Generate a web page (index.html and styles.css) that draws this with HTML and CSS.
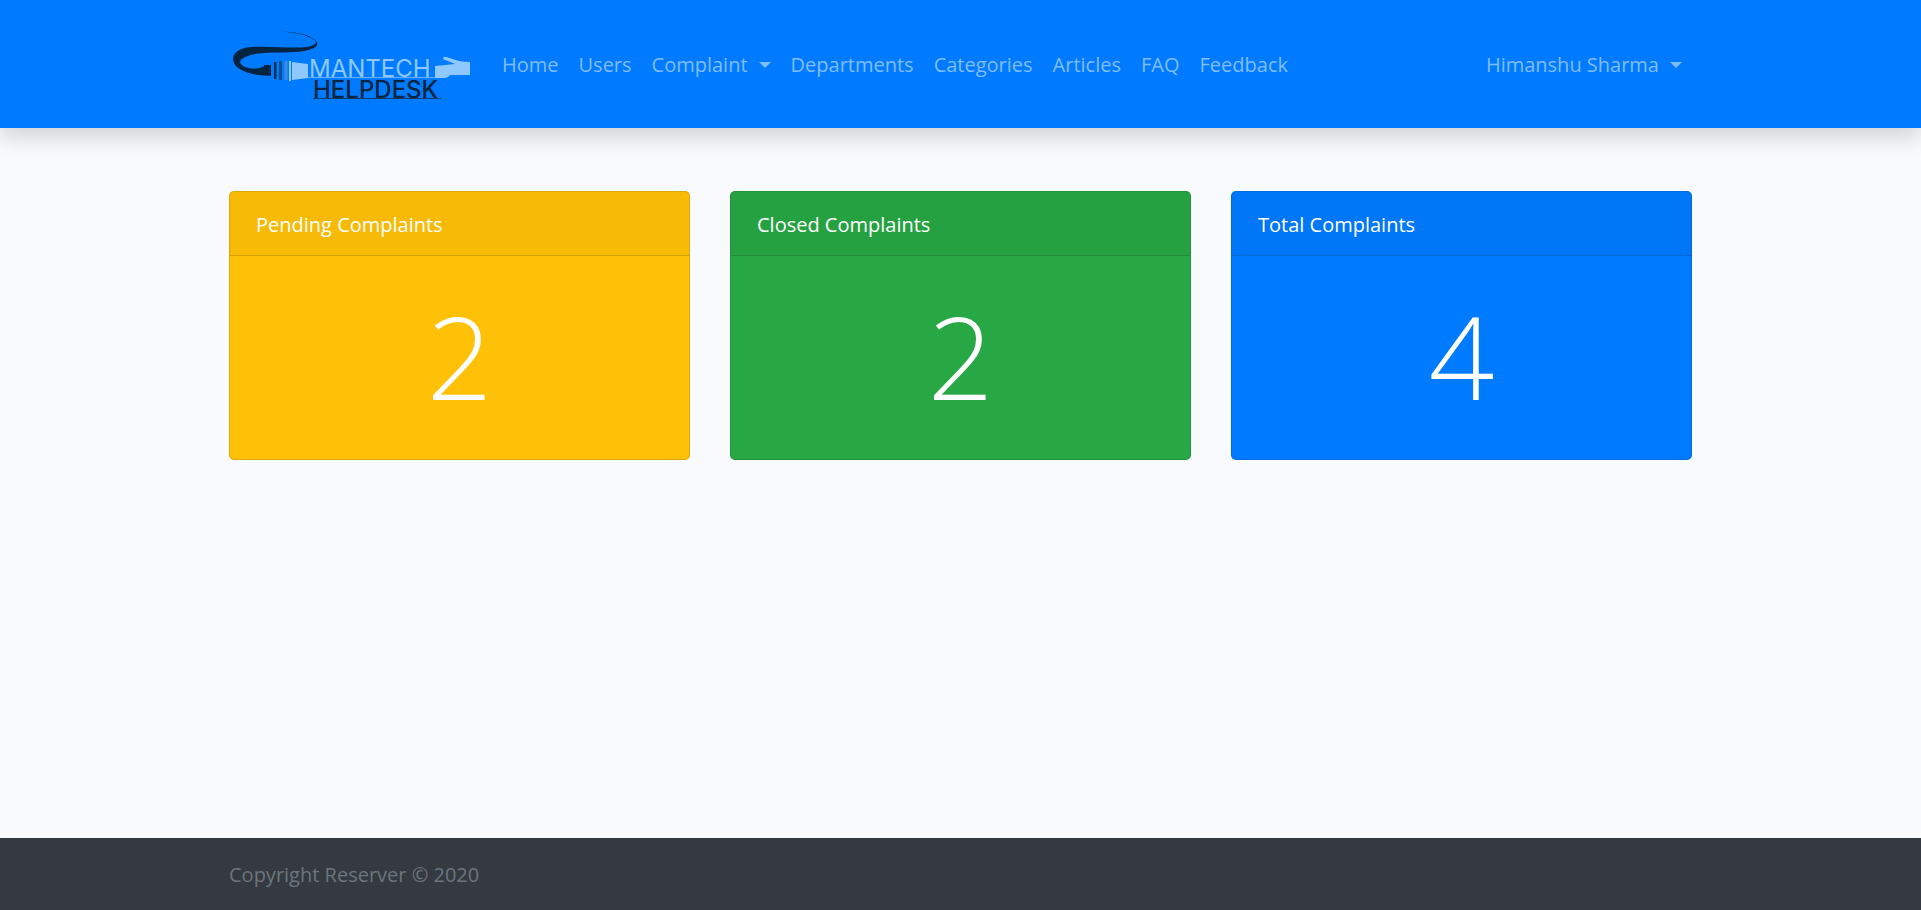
FILE: index.html
```html
<!DOCTYPE html>
<html lang="en">
<head>
<meta charset="utf-8">
<meta name="viewport" content="width=device-width, initial-scale=1">
<title>Mantech Helpdesk</title>
<link rel="stylesheet" href="styles.css">
</head>
<body>
<header class="navbar">
  <div class="container navbar-inner">
    <a class="brand" href="#" aria-label="Mantech Helpdesk">
      <svg class="logo" viewBox="229 24 244 80" role="img" aria-hidden="true">
        <path fill="#012440" d="M282 31.500C295 32 306 34 312 38C321 43 318 48 307 50.500C293 54 272 51 255 54C241 57 236 62 244 66.500C250 69.500 258 69 264 66.500V65L271 65V76L264 75.500C252 75 241 71 236 66C230 59 233 50 247 47.500C266 45 289 49 306 47C317 45 319 42 311 38C304 34 295 33 282 31.500Z"/>
        <path fill="#012f5a" d="M274 62h2.500v17H274z"/>
        <path fill="#0a4f93" d="M279 61h3v19h-3z"/>
        <path fill="#3e8fdd" d="M284.500 61h3v19h-3z"/>
        <path fill="#8ec8ff" d="M289 61h2v20h-2zM292 62l16 2v14l-16 2z"/>
        <path fill="#64b0ff" d="M308 77h127v1H308z"/>
        <text class="logo-text"><tspan class="logo-top" x="309" y="77">MANTECH</tspan><tspan class="logo-bottom" x="313" y="98">HELPDESK</tspan></text>
        <path fill="#063b72" d="M313 98h128v1H313z"/>
        <path fill="#8ec8ff" d="M435 66L455 64L443 59Q443 56 446 57L459 61Q465 62 470 62V75H450Q448 78 444 78H435Z"/>
      </svg>
    </a>
    <nav class="nav" aria-label="Main">
      <a class="nav-link" href="#">Home</a>
      <a class="nav-link" href="#">Users</a>
      <button class="nav-link dropdown" type="button" aria-haspopup="true">Complaint</button>
      <a class="nav-link" href="#">Departments</a>
      <a class="nav-link" href="#">Categories</a>
      <a class="nav-link" href="#">Articles</a>
      <a class="nav-link" href="#">FAQ</a>
      <a class="nav-link" href="#">Feedback</a>
    </nav>
    <button class="nav-link dropdown" type="button" aria-haspopup="true">Himanshu Sharma</button>
  </div>
</header>
<main class="container cards">
  <section class="card card-warning">
    <h2 class="card-header">Pending Complaints</h2>
    <p class="card-value">2</p>
  </section>
  <section class="card card-success">
    <h2 class="card-header">Closed Complaints</h2>
    <p class="card-value">2</p>
  </section>
  <section class="card card-primary">
    <h2 class="card-header">Total Complaints</h2>
    <p class="card-value">4</p>
  </section>
</main>
<footer class="footer">
  <div class="container">Copyright Reserver © 2020</div>
</footer>
</body>
</html>
```
FILE: styles.css
```css
* {
  box-sizing: border-box;
}

body {
  display: flex;
  flex-direction: column;
  min-height: 100vh;
  margin: 0;
  background: #f8fafc;
  font-family: "Open Sans", "Noto Sans", sans-serif;
  font-size: 20px;
  line-height: 32px;
}

.container {
  width: 100%;
  max-width: 1503px;
  margin: 0 auto;
  padding: 0 20px;
}

.navbar {
  padding: 24px 0;
  background: #007bff;
  box-shadow: 0 10px 20px rgba(0, 0, 0, 0.15);
}

.navbar-inner {
  display: flex;
  align-items: center;
}

.brand {
  display: block;
  margin-right: 19px;
}

.logo {
  display: block;
  width: 244px;
  height: 80px;
}

.logo-text {
  font-family: Inter, sans-serif;
  font-size: 24px;
}

.logo-top {
  fill: #8ec8ff;
}

.logo-bottom {
  font-weight: 500;
  fill: #012440;
}

.nav {
  display: flex;
  flex: 1;
}

.nav-link {
  display: flex;
  align-items: center;
  padding: 2px 10px 0;
  border: 0;
  background: none;
  color: #80bdff;
  font: inherit;
  text-decoration: none;
  white-space: nowrap;
  cursor: pointer;
}

.dropdown::after {
  content: "";
  margin-left: 11px;
  border: 6px solid transparent;
  border-top-color: currentColor;
  border-bottom: 0;
}

.cards {
  display: grid;
  grid-template-columns: repeat(3, 1fr);
  gap: 40px;
  flex: 1;
  align-content: start;
  padding-top: 63px;
  padding-bottom: 63px;
}

.card {
  border: 1px solid rgba(0, 0, 0, 0.125);
  border-radius: 5px;
  color: #fff;
}

.card-header {
  margin: 0;
  padding: 17px 26px 14px;
  border-bottom: 1px solid rgba(0, 0, 0, 0.125);
  background: rgba(0, 0, 0, 0.03);
  font-size: 20px;
  font-weight: 400;
  line-height: 32px;
}

.card-value {
  margin: 0;
  padding: 31px 26px 34px;
  font-size: 115px;
  font-weight: 300;
  line-height: 138px;
  text-align: center;
}

.card-warning {
  background: #ffc107;
}

.card-success {
  background: #28a745;
}

.card-primary {
  background: #007bff;
}

.footer {
  padding: 21px 0 19px;
  background: #343a40;
  color: #6c757d;
}
```
